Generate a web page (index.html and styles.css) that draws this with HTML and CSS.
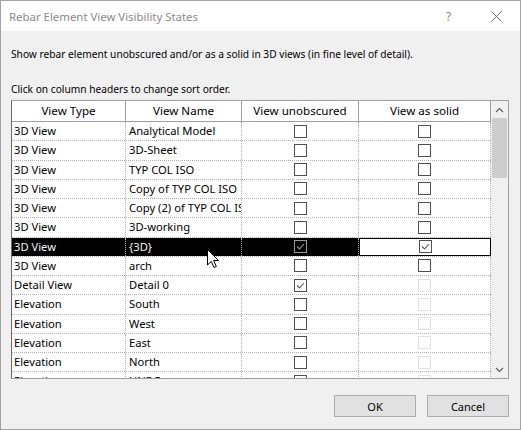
FILE: index.html
```html
<!DOCTYPE html>
<html>
<head>
<meta charset="utf-8">
<link rel="stylesheet" href="styles.css">
</head>
<body>
<div class="window">
  <div class="titlebar">
    <span class="title">Rebar Element View Visibility States</span>
    <span class="help">?</span>
    <span class="close"><svg width="11" height="11" viewBox="0 0 11 11"><path d="M0.5 0.5 L10.5 10.5 M10.5 0.5 L0.5 10.5" stroke="#666" stroke-width="1" fill="none"/></svg></span>
  </div>
  <div class="content">
    <p class="info">Show rebar element unobscured and/or as a solid in 3D views (in fine level of detail).</p>
    <p class="hint">Click on column headers to change sort order.</p>
    <div class="grid">
      <div class="table">
        <div class="hrow">
          <div class="hcell">View Type</div>
          <div class="hcell">View Name</div>
          <div class="hcell">View unobscured</div>
          <div class="hcell">View as solid</div>
        </div>
        <div class="rows">
          <div class="row"><div class="cell">3D View</div><div class="cell">Analytical Model</div><div class="cell cc"><span class="cb"></span></div><div class="cell cc"><span class="cb"></span></div></div>
          <div class="row"><div class="cell">3D View</div><div class="cell">3D-Sheet</div><div class="cell cc"><span class="cb"></span></div><div class="cell cc"><span class="cb"></span></div></div>
          <div class="row"><div class="cell">3D View</div><div class="cell">TYP COL ISO</div><div class="cell cc"><span class="cb"></span></div><div class="cell cc"><span class="cb"></span></div></div>
          <div class="row"><div class="cell">3D View</div><div class="cell">Copy of TYP COL ISO</div><div class="cell cc"><span class="cb"></span></div><div class="cell cc"><span class="cb"></span></div></div>
          <div class="row"><div class="cell">3D View</div><div class="cell">Copy (2) of TYP COL ISO</div><div class="cell cc"><span class="cb"></span></div><div class="cell cc"><span class="cb"></span></div></div>
          <div class="row"><div class="cell">3D View</div><div class="cell">3D-working</div><div class="cell cc"><span class="cb"></span></div><div class="cell cc"><span class="cb"></span></div></div>
          <div class="row selected"><div class="cell">3D View</div><div class="cell">{3D}</div><div class="cell cc"><span class="cb checked"><svg width="11" height="11" viewBox="0 0 11 11"><path d="M2 5.5 L4.5 8 L9 3" stroke="#9a9a9a" stroke-width="1.1" fill="none"/></svg></span></div><div class="cell cc focus"><span class="cb checked"><svg width="11" height="11" viewBox="0 0 11 11"><path d="M2 5.5 L4.5 8 L9 3" stroke="#555" stroke-width="1.1" fill="none"/></svg></span></div></div>
          <div class="row"><div class="cell">3D View</div><div class="cell">arch</div><div class="cell cc"><span class="cb"></span></div><div class="cell cc"><span class="cb"></span></div></div>
          <div class="row"><div class="cell">Detail View</div><div class="cell">Detail 0</div><div class="cell cc"><span class="cb checked"><svg width="11" height="11" viewBox="0 0 11 11"><path d="M2 5.5 L4.5 8 L9 3" stroke="#555" stroke-width="1.1" fill="none"/></svg></span></div><div class="cell cc"><span class="cb disabled"></span></div></div>
          <div class="row"><div class="cell">Elevation</div><div class="cell">South</div><div class="cell cc"><span class="cb"></span></div><div class="cell cc"><span class="cb disabled"></span></div></div>
          <div class="row"><div class="cell">Elevation</div><div class="cell">West</div><div class="cell cc"><span class="cb"></span></div><div class="cell cc"><span class="cb disabled"></span></div></div>
          <div class="row"><div class="cell">Elevation</div><div class="cell">East</div><div class="cell cc"><span class="cb"></span></div><div class="cell cc"><span class="cb disabled"></span></div></div>
          <div class="row"><div class="cell">Elevation</div><div class="cell">North</div><div class="cell cc"><span class="cb"></span></div><div class="cell cc"><span class="cb disabled"></span></div></div>
          <div class="row"><div class="cell">Elevation</div><div class="cell">UNF 5</div><div class="cell cc"><span class="cb"></span></div><div class="cell cc"><span class="cb disabled"></span></div></div>
        </div>
      </div>
      <div class="vscroll">
        <div class="arrow"><svg width="9" height="6" viewBox="0 0 9 6"><path d="M1 5 L4.5 1.5 L8 5" stroke="#606060" stroke-width="1.2" fill="none"/></svg></div>
        <div class="track"><div class="thumb"></div></div>
        <div class="arrow"><svg width="9" height="6" viewBox="0 0 9 6"><path d="M1 1 L4.5 4.5 L8 1" stroke="#606060" stroke-width="1.2" fill="none"/></svg></div>
      </div>
      <svg class="cursor" width="13" height="20" viewBox="0 0 13 20"><path d="M0.5 0.5 L0.5 16 L4.3 12.4 L7 18.5 L9.3 17.5 L6.7 11.5 L11.5 11.5 Z" fill="#fff" stroke="#000" stroke-width="1"/></svg>
    </div>
    <div class="buttons">
      <button class="btn">OK</button>
      <button class="btn">Cancel</button>
    </div>
  </div>
</div>
</body>
</html>
```
FILE: styles.css
```css
* { box-sizing: border-box; }
body {
  margin: 0;
  font-family: "Noto Sans", "Open Sans", sans-serif;
  font-size: 10.2px;
  color: #000;
  background: #f0f0f0;
}
.window {
  width: 521px;
  height: 430px;
  border: 1px solid #a3a3a3;
  background: #f0f0f0;
  display: flex;
  flex-direction: column;
}
.titlebar {
  height: 30px;
  background: #fff;
  display: flex;
  align-items: center;
  padding-left: 8px;
}
.title {
  font-size: 11.4px;
  color: #8a8a8a;
  flex: 1;
}
.help {
  font-size: 12px;
  color: #8a8a8a;
  width: 12px;
  margin-right: 33px;
}
.close {
  display: flex;
  margin-right: 18px;
}
.content {
  padding: 0 10px;
  flex: 1;
  display: flex;
  flex-direction: column;
  position: relative;
}
.info {
  margin: 15px 0 0 0;
  line-height: 16px;
}
.hint {
  margin: 19px 0 0 0;
  line-height: 16px;
}
.grid {
  margin-top: 3px;
  width: 498px;
  height: 279px;
  border: 1px solid #a0a0a0;
  border-left-color: #6a6a6a;
  background: #fff;
  display: flex;
  position: relative;
}
.table {
  width: 479px;
  display: flex;
  flex-direction: column;
  overflow: hidden;
}
.hrow {
  display: grid;
  grid-template-columns: 114px 116px 117px 132px;
  height: 21px;
  border-bottom: 1px solid #a0a0a0;
  flex: none;
}
.hcell {
  font-size: 11.6px;
  text-align: center;
  line-height: 20px;
  border-right: 1px solid #a0a0a0;
  white-space: nowrap;
  overflow: hidden;
}
.rows {
  flex: 1;
  overflow: hidden;
}
.row {
  display: grid;
  grid-template-columns: 114px 116px 117px 132px;
  height: 19.25px;
  border-bottom: 1px dotted #b0b0b0;
}
.cell {
  border-right: 1px dotted #b0b0b0;
  white-space: nowrap;
  overflow: hidden;
  padding-left: 3px;
  line-height: 18px;
  font-size: 11.2px;
}
.cell:first-child { padding-left: 2px; }
.cc {
  display: flex;
  align-items: center;
  justify-content: center;
  padding-left: 0;
}
.cb {
  width: 13px;
  height: 13px;
  border: 1px solid #505050;
  background: #fff;
  display: flex;
  align-items: center;
  justify-content: center;
}
.cb.disabled { border-color: #e2e2e2; }
.selected .cell {
  background: #000;
  color: #f2f2f2;
}
.selected .cell .cb {
  background: #000;
  border-color: #9a9a9a;
}
.selected .cell.focus {
  background: #fff;
  border: 1px solid #000;
}
.selected .cell.focus .cb {
  background: #fff;
  border-color: #505050;
}
.vscroll {
  width: 17px;
  background: #f0f0f0;
  display: flex;
  flex-direction: column;
}
.arrow {
  height: 17px;
  display: flex;
  align-items: center;
  justify-content: center;
}
.track {
  flex: 1;
  padding: 0 1px;
}
.thumb {
  margin-top: 0;
  height: 60px;
  background: #cdcdcd;
}
.cursor {
  position: absolute;
  left: 195px;
  top: 148px;
}
.buttons {
  display: flex;
  justify-content: flex-end;
  gap: 11px;
  margin-top: 16px;
  padding-right: 1px;
}
.btn {
  width: 82px;
  height: 22px;
  background: #e1e1e1;
  border: 1px solid #adadad;
  font-family: "Noto Sans", "Open Sans", sans-serif;
  font-size: 11px;
  color: #000;
  padding: 0;
}
```
